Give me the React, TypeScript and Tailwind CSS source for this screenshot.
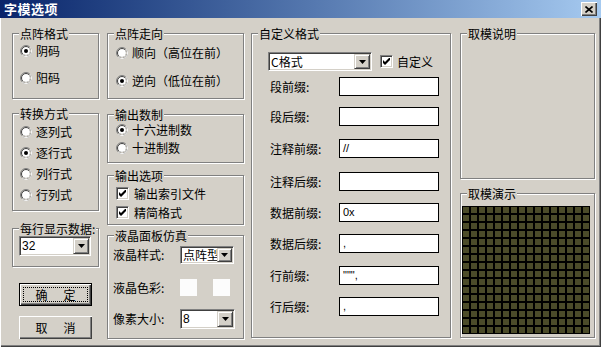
import React from 'react';

const sunken =
  'border border-t-[#808080] border-l-[#808080] border-r-white border-b-white shadow-[inset_1px_1px_0_#404040,inset_-1px_-1px_0_#d4d0c8]';
const raised =
  'bg-[#d4d0c8] shadow-[inset_1px_1px_0_#fff,inset_-1px_-1px_0_#404040,inset_-2px_-2px_0_#808080]';

function Radio({ on }: { on?: boolean }) {
  return (
    <svg width="12" height="12" viewBox="0 0 12 12" className="shrink-0">
      <circle cx="6" cy="6" r="5.5" fill="none" stroke="#808080" />
      <path d="M9.89 2.11 A5.5 5.5 0 0 1 2.11 9.89" fill="none" stroke="#fff" />
      <circle cx="6" cy="6" r="4.5" fill="#fff" stroke="#404040" />
      <path d="M9.18 2.82 A4.5 4.5 0 0 1 2.82 9.18" fill="none" stroke="#d4d0c8" />
      {on && <circle cx="6" cy="6" r="2" fill="#000" />}
    </svg>
  );
}

function Check() {
  return (
    <span className={`flex h-[13px] w-[13px] shrink-0 items-center justify-center bg-white ${sunken}`}>
      <svg width="7" height="7" viewBox="0 0 7 7">
        <path d="M0 2 L2 4 L7 -1 L7 2 L2 7 L0 5 Z" fill="#000" />
      </svg>
    </span>
  );
}

function ArrowBtn({ w = 'w-[16px]' }: { w?: string }) {
  return (
    <span className={`relative flex ${w} shrink-0 items-center justify-center bg-[#d4d0c8] border border-t-[#d4d0c8] border-l-[#d4d0c8] border-r-[#404040] border-b-[#404040] shadow-[inset_1px_1px_0_#fff,inset_-1px_-1px_0_#808080]`}>
      <svg width="7" height="4" viewBox="0 0 7 4">
        <path d="M0 0h7L3.5 4z" fill="#000" />
      </svg>
    </span>
  );
}

function Combo({ value, className, arrow }: { value: string; className: string; arrow?: string }) {
  return (
    <div className={`flex bg-white p-px ${sunken} ${className}`}>
      <span className="min-w-0 flex-1 self-center whitespace-nowrap pl-[1px] leading-[14px]">{value}</span>
      <ArrowBtn w={arrow} />
    </div>
  );
}

function Group({ title, className, children }: { title: string; className: string; children?: React.ReactNode }) {
  return (
    <div className={`relative border border-[#808080] shadow-[inset_1px_1px_0_#fff,1px_1px_0_#fff] ${className}`}>
      <span className="absolute left-[6px] top-[-7px] bg-[#d4d0c8] px-px leading-[14px]">{title}</span>
      {children}
    </div>
  );
}

function RadioRow({ label, on }: { label: string; on?: boolean }) {
  return (
    <div className="flex h-[16px] items-center gap-[4px]">
      <Radio on={on} />
      <span className="leading-[14px]">{label}</span>
    </div>
  );
}

const fields = [
  { label: '段前缀:', value: '', mt: 'mt-[6px]' },
  { label: '段后缀:', value: '', mt: 'mt-[11px]' },
  { label: '注释前缀:', value: '//', mt: 'mt-[13px]' },
  { label: '注释后缀:', value: '', mt: 'mt-[14px]' },
  { label: '数据前缀:', value: '0x', mt: 'mt-[12px]' },
  { label: '数据后缀:', value: ',', mt: 'mt-[12px]' },
  { label: '行前缀:', value: '""",', mt: 'mt-[13px]' },
  { label: '行后缀:', value: ',', mt: 'mt-[12px]' },
];

export default function App() {
  return (
    <div className="flex h-[347px] w-[601px] flex-col overflow-hidden bg-[#d4d0c8] text-[12px] text-black [font-family:'Noto_Sans_CJK_SC',sans-serif] shadow-[inset_1px_0_0_#fff,inset_-1px_-1px_0_#404040,inset_-2px_-2px_0_#808080]">
      <div className="flex h-[18px] shrink-0 items-center justify-between bg-linear-to-r from-[#0a246a] to-[#a6caf0] pl-[4px] pr-[4px]">
        <span className="text-[13px] font-bold leading-[16px] tracking-[0.5px] text-white">字模选项</span>
        <span className={`flex h-[14px] w-[16px] items-center justify-center ${raised}`}>
          <svg width="8" height="7" viewBox="0 0 8 7">
            <path d="M0.5 0.5 L7.5 6.5 M7.5 0.5 L0.5 6.5" stroke="#000" strokeWidth="1.6" />
          </svg>
        </span>
      </div>

      <div className="flex pl-[12px] pt-[15px]">
        {/* column 1 */}
        <div className="flex w-[87px] flex-col">
          <Group title="点阵格式" className="h-[66px] pl-[7px] pt-[9px]">
            <div className="flex flex-col gap-[11px]">
              <RadioRow label="阴码" on />
              <RadioRow label="阳码" />
            </div>
          </Group>
          <Group title="转换方式" className="mt-[14px] h-[98px] pl-[7px] pt-[10px]">
            <div className="flex flex-col gap-[5px]">
              <RadioRow label="逐列式" />
              <RadioRow label="逐行式" on />
              <RadioRow label="列行式" />
              <RadioRow label="行列式" />
            </div>
          </Group>
          <Group title="每行显示数据:" className="mt-[17px] h-[39px] pl-[6px] pt-[7px]">
            <Combo value="32" className="h-[20px] w-[72px] [font-family:'Liberation_Sans',sans-serif]" />
          </Group>
          <button className={`mt-[16px] ml-[7px] flex h-[23px] w-[73px] items-center justify-center gap-[16px] border border-black ${raised} outline-1 outline-dotted outline-black outline-offset-[-5px]`}>
            <span>确</span>
            <span>定</span>
          </button>
          <button className={`mt-[10px] ml-[7px] flex h-[23px] w-[73px] items-center justify-center gap-[16px] ${raised}`}>
            <span>取</span>
            <span>消</span>
          </button>
        </div>

        {/* column 2 */}
        <div className="ml-[8px] flex w-[137px] flex-col">
          <Group title="点阵走向" className="h-[66px] pl-[8px] pt-[11px]">
            <div className="flex flex-col gap-[12px]">
              <RadioRow label="顺向（高位在前）" />
              <RadioRow label="逆向（低位在前）" on />
            </div>
          </Group>
          <Group title="输出数制" className="mt-[15px] h-[49px] pl-[8px] pt-[7px]">
            <div className="flex flex-col gap-[2px]">
              <RadioRow label="十六进制数" on />
              <RadioRow label="十进制数" />
            </div>
          </Group>
          <Group title="输出选项" className="mt-[12px] h-[50px] pl-[8px] pt-[11px]">
            <div className="flex flex-col gap-[6px]">
              <div className="flex h-[13px] items-center gap-[5px]">
                <Check />
                <span className="leading-[14px]">输出索引文件</span>
              </div>
              <div className="flex h-[13px] items-center gap-[5px]">
                <Check />
                <span className="leading-[14px]">精简格式</span>
              </div>
            </div>
          </Group>
          <Group title="液晶面板仿真" className="mt-[10px] h-[104px] pl-[5px] pt-[10px]">
            <div className="flex flex-col">
              <div className="flex h-[18px] items-center">
                <span className="w-[67px] leading-[14px]">液晶样式:</span>
                <Combo value="点阵型" arrow="w-[15px]" className="h-[18px] w-[54px]" />
              </div>
              <div className="mt-[15px] flex h-[17px] items-center">
                <span className="w-[67px] leading-[14px]">液晶色彩:</span>
                <span className="h-[17px] w-[17px] bg-[#fcfcfc]" />
                <span className="ml-[16px] h-[17px] w-[17px] bg-[#fcfcfc]" />
              </div>
              <div className="mt-[13px] flex h-[20px] items-center">
                <span className="w-[67px] leading-[14px]">像素大小:</span>
                <Combo value="8" className="h-[20px] w-[55px] [font-family:'Liberation_Sans',sans-serif]" />
              </div>
            </div>
          </Group>
        </div>

        {/* column 3 */}
        <div className="ml-[7px] flex w-[200px] flex-col">
          <Group title="自定义格式" className="h-[305px] pt-[18px]">
            <div className="flex h-[19px] items-center pl-[16px]">
              <Combo value="C格式" className="h-[19px] w-[104px]" />
              <span className="ml-[8px]">
                <Check />
              </span>
              <span className="ml-[4px] leading-[14px]">自定义</span>
            </div>
            {fields.map((f) => (
              <div key={f.label} className={`flex h-[19px] items-center pl-[18px] ${f.mt}`}>
                <span className="w-[69px] leading-[14px]">{f.label}</span>
                <span className="flex h-[19px] w-[100px] items-center border border-black bg-white pl-[3px] text-[11px] [font-family:'Liberation_Sans',sans-serif]">
                  {f.value}
                </span>
              </div>
            ))}
          </Group>
        </div>

        {/* column 4 */}
        <div className="ml-[9px] flex w-[135px] flex-col">
          <Group title="取模说明" className="h-[146px]" />
          <Group title="取模演示" className="mt-[14px] h-[145px] pl-px pt-[12px]">
            <div className="grid w-fit grid-cols-[repeat(16,6px)] gap-[2px] bg-black p-px">
              {Array.from({ length: 256 }).map((_, i) => (
                <span key={i} className="h-[6px] w-[6px] bg-[#4b4b29]" />
              ))}
            </div>
          </Group>
        </div>
      </div>
    </div>
  );
}
